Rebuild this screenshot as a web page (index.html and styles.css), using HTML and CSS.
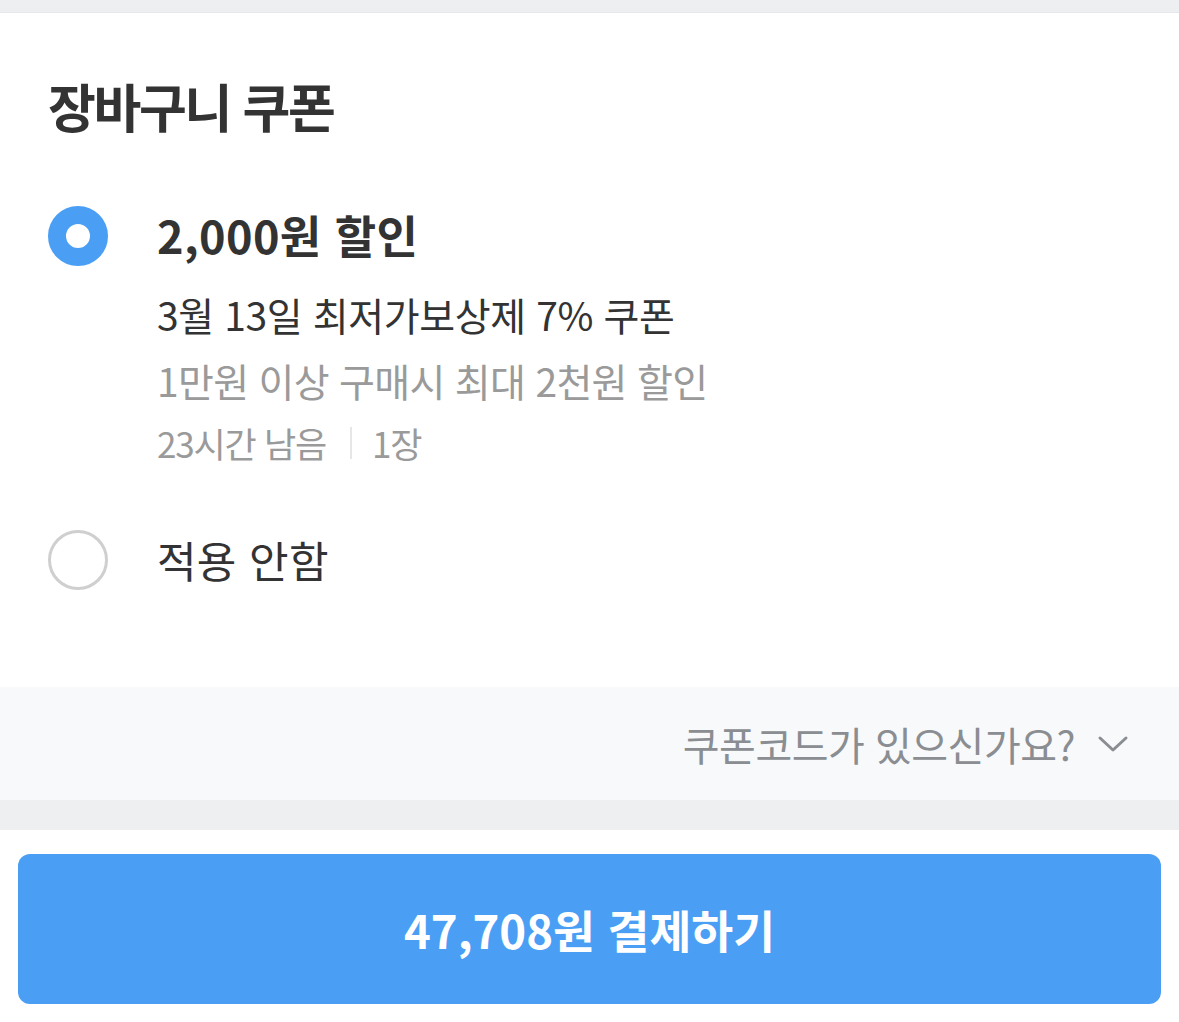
FILE: index.html
```html
<!DOCTYPE html>
<html lang="ko">
<head>
<meta charset="utf-8">
<link rel="stylesheet" href="styles.css">
</head>
<body>
<div class="page">
  <div class="topband"></div>
  <section class="coupons">
    <h1 class="title">장바구니 쿠폰</h1>
    <div class="option selected">
      <span class="radio on"></span>
      <div class="info">
        <div class="amount">2,000원 할인</div>
        <div class="name">3월 13일 최저가보상제 7% 쿠폰</div>
        <div class="cond">1만원 이상 구매시 최대 2천원 할인</div>
        <div class="meta"><span>23시간 남음</span><span class="sep"></span><span>1장</span></div>
      </div>
    </div>
    <div class="option none">
      <span class="radio off"></span>
      <div class="info"><div class="label">적용 안함</div></div>
    </div>
  </section>
  <div class="codebar">
    <span class="codetext">쿠폰코드가 있으신가요?</span>
    <svg class="chev" width="32" height="20" viewBox="0 0 32 20"><path d="M3 4 L16 16 L29 4" fill="none" stroke="#8a8d91" stroke-width="3" stroke-linecap="round" stroke-linejoin="round"/></svg>
  </div>
  <div class="gapband"></div>
  <div class="footer">
    <button class="pay">47,708원 결제하기</button>
  </div>
</div>
</body>
</html>
```
FILE: styles.css
```css
* { box-sizing: border-box; }
html, body { margin: 0; padding: 0; background: #fff; }
body { font-family: "Noto Sans CJK KR", "Noto Sans", sans-serif; color: #333; }
.page { width: 1179px; }
.topband { height: 13px; background: #eeeff1; border-bottom: 1px solid #e6e7ea; }
.coupons { padding: 58px 0 0 48px; height: 674px; }
.title { margin: 0; font-size: 52px; font-weight: 700; letter-spacing: -2.3px; line-height: 70px; color: #333; }
.option { display: flex; align-items: flex-start; }
.option.selected { margin-top: 65px; }
.option.none { margin-top: 65px; }
.radio { width: 60px; height: 60px; border-radius: 50%; flex: none; }
.radio.on { border: 18px solid #4a9ff5; background: #fff; }
.radio.off { border: 3px solid #cfcfcf; }
.info { margin-left: 49px; }
.amount { font-size: 45px; font-weight: 700; letter-spacing: 0.4px; line-height: 60px; color: #333; margin-top: -1px; }
.name { font-size: 39px; letter-spacing: -0.4px; line-height: 50px; margin-top: 24px; color: #333; }
.cond { font-size: 39px; letter-spacing: -0.7px; line-height: 50px; margin-top: 16px; color: #9a9a9a; }
.meta { display: flex; align-items: center; font-size: 35px; letter-spacing: -1.2px; line-height: 44px; margin-top: 16px; color: #9a9a9a; }
.sep { width: 2px; height: 32px; background: #e6e6e6; margin: 0 20px 0 24px; }
.label { font-size: 43px; letter-spacing: 0.3px; line-height: 60px; color: #333; margin-top: -1px; }
.codebar { height: 113px; background: #f7f9fa; display: flex; align-items: center; justify-content: flex-end; padding-right: 50px; }
.codetext { font-size: 40px; letter-spacing: -0.5px; color: #8a8d91; margin-right: 22px; }
.chev { display: block; }
.gapband { height: 30px; background: #eeeff1; }
.footer { padding: 24px 18px 0 18px; }
.pay { width: 1143px; height: 150px; border: none; border-radius: 12px; background: #4a9ff5; color: #fff; font-family: "Noto Sans CJK KR", sans-serif; font-size: 45.5px; font-weight: 700; letter-spacing: 0; display: block; }
```
